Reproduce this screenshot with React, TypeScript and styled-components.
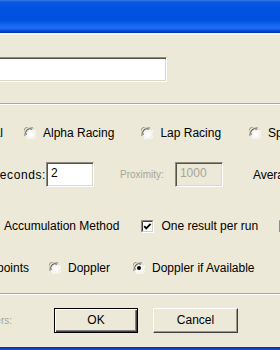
import React from "react";
import styled, { createGlobalStyle } from "styled-components";

const Global = createGlobalStyle`
  html, body { margin: 0; padding: 0; background: #ECE9D8; overflow: hidden; }
  body { font-family: "Liberation Sans", Arial, sans-serif; font-size: 12px; color: #000; }
`;

const Window = styled.div`
  width: 280px;
  height: 350px;
  overflow: hidden;
  display: flex;
  flex-direction: column;
  background: #ECE9D8;
`;

const TitleBar = styled.div`
  flex: none;
  height: 33px;
  background: linear-gradient(
    to bottom,
    #3a7ae8 0px,
    #0b58e2 2px,
    #0053e2 8px,
    #0050dd 20px,
    #1566f2 25px,
    #1c6ef7 28px,
    #0a57e4 30px,
    #003ab0 32px,
    #003ab0 33px
  );
  border-bottom: 2px solid #f4f2ea;
`;

const Body = styled.div`
  flex: 1;
  display: flex;
  flex-direction: column;
  margin-top: -2px;
`;

const Field = styled.div<{ $w: number; $disabled?: boolean }>`
  flex: none;
  box-sizing: border-box;
  width: ${(p) => p.$w}px;
  height: 25px;
  background: ${(p) => (p.$disabled ? "#ECE9D8" : "#fff")};
  color: ${(p) => (p.$disabled ? "#a8a597" : "#000")};
  border-top: 1px solid #8e8c80;
  border-left: 1px solid #8e8c80;
  border-right: 1px solid #fff;
  border-bottom: 1px solid #fff;
  box-shadow: inset 1px 1px 0 #55544c, inset -1px -1px 0 #dcd9cc;
  padding: 2px 0 0 4px;
  line-height: 16px;
`;

const NameField = styled(Field)`
  margin-top: 24px;
  margin-left: -10px;
`;

const Separator = styled.div<{ $mt: number }>`
  flex: none;
  margin-top: ${(p) => p.$mt}px;
  border-top: 1px solid #aca899;
  border-bottom: 1px solid #fff;
`;

const Row = styled.div<{ $mt: number; $h: number }>`
  flex: none;
  display: flex;
  align-items: center;
  margin-top: ${(p) => p.$mt}px;
  height: ${(p) => p.$h}px;
  white-space: nowrap;
`;

const Label = styled.span<{ $ml?: number; $small?: boolean; $disabled?: boolean }>`
  flex: none;
  margin-left: ${(p) => p.$ml ?? 0}px;
  font-size: ${(p) => (p.$small ? 10 : 12)}px;
  color: ${(p) => (p.$disabled ? "#a8a597" : "#000")};
`;

const EndLabel = styled.span<{
  $end: number;
  $small?: boolean;
  $disabled?: boolean;
  $spacing?: number;
}>`
  flex: none;
  width: 140px;
  margin-left: ${(p) => p.$end - 140}px;
  text-align: right;
  letter-spacing: ${(p) => p.$spacing ?? 0}px;
  font-size: ${(p) => (p.$small ? 10 : 12)}px;
  color: ${(p) => (p.$disabled ? "#a8a597" : "#000")};
`;

const Option = styled.label<{ $ml: number }>`
  flex: none;
  display: flex;
  align-items: center;
  gap: 7px;
  margin-left: ${(p) => p.$ml}px;
`;

const Spacer = styled.span<{ $w: number }>`
  flex: none;
  width: ${(p) => p.$w}px;
`;

const Button = styled.div<{ $w: number; $ml: number; $default?: boolean }>`
  flex: none;
  box-sizing: border-box;
  width: ${(p) => p.$w}px;
  height: 25px;
  margin-left: ${(p) => p.$ml}px;
  display: flex;
  align-items: center;
  justify-content: center;
  background: #ECE9D8;
  font-size: 12px;
  border: 1px solid ${(p) => (p.$default ? "#000" : "transparent")};
  border-top-color: ${(p) => (p.$default ? "#000" : "#fff")};
  border-left-color: ${(p) => (p.$default ? "#000" : "#fff")};
  border-right-color: ${(p) => (p.$default ? "#000" : "#404040")};
  border-bottom-color: ${(p) => (p.$default ? "#000" : "#404040")};
  box-shadow: ${(p) =>
    p.$default
      ? "inset 1px 1px 0 #fff, inset -1px -1px 0 #404040, inset -2px -2px 0 #808080"
      : "inset -1px -1px 0 #9c998c"};
  padding-bottom: 1px;
`;

const BottomBar = styled.div`
  flex: none;
  margin-top: auto;
  height: 3px;
  background: linear-gradient(to bottom, #0c2f9c, #1f4fcc);
`;

function Radio({ checked }: { checked?: boolean }) {
  const id = checked ? "rgc" : "rg";
  return (
    <svg width="12" height="12" viewBox="0 0 12 12">
      <defs>
        <radialGradient id={id} cx="0.6" cy="0.65" r="0.6">
          <stop offset="0" stopColor="#ffffff" />
          <stop offset="0.7" stopColor="#f4f3ee" />
          <stop offset="1" stopColor="#d6d3c6" />
        </radialGradient>
      </defs>
      <circle cx="6" cy="6" r="5.5" fill={`url(#${id})`} />
      <path d="M1.2 9 A5.3 5.3 0 0 1 9 1.2" fill="none" stroke="#8a887c" strokeWidth="1" />
      <path d="M2.2 8 A4.3 4.3 0 0 1 8 2.2" fill="none" stroke="#55544c" strokeWidth="1" />
      <path d="M10.8 3 A5.3 5.3 0 0 1 3 10.8" fill="none" stroke="#fff" strokeWidth="1" />
      {checked && <circle cx="6" cy="6" r="2" fill="#000" />}
    </svg>
  );
}

function Check({ checked }: { checked?: boolean }) {
  return (
    <svg width="13" height="13" viewBox="0 0 13 13">
      <rect x="0" y="0" width="13" height="13" fill="#fff" />
      <path d="M0.5 12.5 V0.5 H12.5" fill="none" stroke="#8e8c80" />
      <path d="M1.5 11.5 V1.5 H11.5" fill="none" stroke="#404040" />
      <path d="M12.5 0.5 V12.5 H0.5" fill="none" stroke="#fff" />
      <path d="M11.5 1.5 V11.5 H1.5" fill="none" stroke="#d4d0c8" />
      {checked && (
        <path d="M3.2 6.2 L5.2 8.4 L9.6 3.8" fill="none" stroke="#000" strokeWidth="1.8" />
      )}
    </svg>
  );
}

export default function App() {
  return (
    <>
      <Global />
      <Window>
        <TitleBar />
        <Body>
          <NameField $w={177} />
          <Separator $mt={21} />

          <Row $mt={16} $h={24}>
            <EndLabel $end={3}>Time Trial</EndLabel>
            <Option $ml={21}>
              <Radio />
              <span>Alpha Racing</span>
            </Option>
            <Option $ml={27}>
              <Radio />
              <span>Lap Racing</span>
            </Option>
            <Option $ml={28}>
              <Radio />
              <span>Sprint Racing</span>
            </Option>
          </Row>

          <Row $mt={17} $h={25}>
            <EndLabel $end={46} $spacing={0.6}>
              Delay Seconds:
            </EndLabel>
            <Field $w={48}>2</Field>
            <Label $ml={26} $small $disabled>
              Proximity:
            </Label>
            <Spacer $w={11} />
            <Field $w={48} $disabled>
              1000
            </Field>
            <Label $ml={30}>Average</Label>
          </Row>

          <Row $mt={27} $h={24}>
            <Label $ml={4}>Accumulation Method</Label>
            <Option $ml={22}>
              <Check checked />
              <span>One result per run</span>
            </Option>
            <Option $ml={21}>
              <Check />
              <span>Auto</span>
            </Option>
          </Row>

          <Row $mt={18} $h={24}>
            <EndLabel $end={29}>Use Waypoints</EndLabel>
            <Option $ml={20}>
              <Radio />
              <span>Doppler</span>
            </Option>
            <Option $ml={23}>
              <Radio checked />
              <span>Doppler if Available</span>
            </Option>
          </Row>

          <Separator $mt={13} />

          <Row $mt={13} $h={25}>
            <EndLabel $end={12} $small $disabled>
              Filters:
            </EndLabel>
            <Button $w={84} $ml={42} $default>
              OK
            </Button>
            <Button $w={85} $ml={15}>
              Cancel
            </Button>
          </Row>

          <BottomBar />
        </Body>
      </Window>
    </>
  );
}
